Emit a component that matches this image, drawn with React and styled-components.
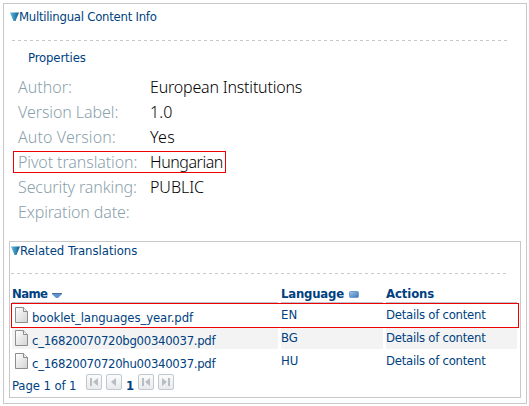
import React from 'react';
import styled, { createGlobalStyle } from 'styled-components';

const GlobalStyle = createGlobalStyle`
  * { box-sizing: border-box; }
  body { margin: 0; background: #fff; color: #003f80; font: 13px/16px "DejaVu Sans Condensed", Tahoma, sans-serif; }
`;
const Page = styled.main`
  width: 529px; height: 406px; padding: 3px 2px 2px 3px; overflow: hidden;
`;
const OuterPanel = styled.section`
  width: 524px; height: 401px; border: 1px solid #c8c8c8; padding: 0 5px;
`;
const InnerPanel = styled.section`
  width: 512px; height: 157px; border: 1px solid #c8c8c8; margin-top: 18px; padding: 0 1px;
`;
const Text = styled.span`
  letter-spacing: ${p => p.$spacing || 0}px; white-space: nowrap;
`;
const Title = styled.h2`
  display: flex; align-items: flex-start; margin: 0; height: ${p => p.$height}px;
  padding: ${p => p.$pad}; font-size: 13px; font-weight: 400; line-height: 16px;
  svg { margin-top: 3px; flex: none; }
`;
const Divider = styled.div`
  height: 1px; width: ${p => p.$width}px; margin-left: ${p => p.$left}px;
  background: repeating-linear-gradient(90deg, #c8c8c8 0 3px, #fff 3px 6px);
`;
const Subtitle = styled.h3`
  margin: 9px 0 10px 19px; font-size: 13px; font-weight: 400; line-height: 16px;
`;
const Properties = styled.dl`
  margin: 0 0 0 4px; display: grid; grid-auto-rows: 22px; row-gap: 3px; justify-items: start;
`;
const Property = styled.div`
  display: grid; grid-template-columns: 132px max-content; height: 22px; padding: 0 2px 0 4px;
  border: 1px solid ${p => (p.$marked ? '#f00000' : 'transparent')};
  font: 300 16px/20px "Noto Sans", sans-serif;
  dt { color: #8b9fac; white-space: nowrap; }
  dd { margin: 0; color: #000; white-space: nowrap; }
`;
const Table = styled.div`
  margin-top: 9px; width: 508px;
`;
const Columns = styled.div`
  display: grid; grid-template-columns: 266px 102px 131px; column-gap: 3px; margin-left: 1px;
`;
const HeadCell = styled.div`
  display: flex; align-items: flex-start; height: 20px; padding-top: 3px; font-weight: 700;
  border-bottom: 1px solid #bcc5ca;
  svg { margin: ${p => p.$iconTop || 0}px 0 0 5px; }
`;
const Row = styled(Columns)`
  height: ${p => (p.$marked ? 25 : 21)}px; margin-bottom: ${p => (p.$marked ? 0 : 2)}px;
  ${p => p.$marked && 'margin-left: 0; width: 508px; border: 1px solid #f00000;'}
`;
const Cell = styled.div`
  display: flex; align-items: flex-start; background: ${p => (p.$shaded ? '#f3f3f3' : 'transparent')};
  padding-top: ${p => p.$top}px;
`;
const FileIconBox = styled.span`
  display: flex; flex: none; margin: ${p => p.$top}px 4px 0 3px;
`;
const FileName = styled(Text)`
  margin-top: ${p => p.$top}px;
`;
const Pager = styled.nav`
  display: flex; align-items: flex-start; gap: 4px; margin: 2px 0 0 1px;
`;
const PageCount = styled(Text)`
  width: 70px; margin-top: 4px;
`;
const PageButton = styled.button`
  width: 16px; height: 16px; padding: 0; border: 1px solid #c0c8d0; border-radius: 2px;
  background: linear-gradient(#fbfbfb, #e8eaec); display: grid; place-items: center;
`;
const Current = styled.b`
  width: 8px; margin: 4px 0 0; text-align: center;
`;

const Twisty = () => (
  <svg width="9" height="10" viewBox="0 0 9 10">
    <defs><linearGradient id="tw"><stop stopColor="#62bddc" /><stop offset="1" stopColor="#075b91" /></linearGradient></defs>
    <path d="M0 .5h9L5.5 9h-2z" fill="url(#tw)" />
  </svg>
);
const FileIcon = () => (
  <svg width="13" height="16" viewBox="0 0 13 16">
    <defs><linearGradient id="fi" x2="1" y2="1"><stop stopColor="#fff" /><stop offset="1" stopColor="#d2d2d2" /></linearGradient></defs>
    <path d="M.5.5h8l4 4v11H.5z" fill="url(#fi)" stroke="#8d8d8d" />
    <path d="M8.5.5v4h4" fill="#eee" stroke="#8d8d8d" />
  </svg>
);
const SortDown = () => (
  <svg width="10" height="5" viewBox="0 0 10 5">
    <path d="M0 0h10v1L6 5H4L0 1z" fill="#5f94d0" /><path d="M0 .5h10" stroke="#4a6c94" />
  </svg>
);
const SortNone = () => (
  <svg width="10" height="7" viewBox="0 0 10 7">
    <defs><linearGradient id="sn" x2="1" y2="1"><stop stopColor="#9cc8ee" /><stop offset="1" stopColor="#3c74b5" /></linearGradient></defs>
    <rect x=".5" y=".5" width="9" height="6" rx="1" fill="url(#sn)" stroke="#6f9cca" />
  </svg>
);
const PageIcon = ({ kind }) => (
  <svg width="10" height="10" viewBox="0 0 10 10" fill="#b8bdc1">
    {kind === 'first' && <path d="M1 1h2v8H1zM9 1v8L4 5z" />}
    {kind === 'prev' && <path d="M7 1v8L2 5z" />}
    {kind === 'last' && <path d="M7 1h2v8H7zM1 1v8l5-4z" />}
  </svg>
);

const properties = [
  ['Author:', 'European Institutions', 0, -0.2],
  ['Version Label:', '1.0', -0.08, 0.1],
  ['Auto Version:', 'Yes', 0.1, 0.3],
  ['Pivot translation:', 'Hungarian', -0.1, -0.45],
  ['Security ranking:', 'PUBLIC', -0.1, -0.05],
  ['Expiration date:', '', -0.12, 0],
];
const files = [
  ['booklet_languages_year.pdf', 'EN', -0.09],
  ['c_16820070720bg00340037.pdf', 'BG', -0.29],
  ['c_16820070720hu00340037.pdf', 'HU', -0.29],
];

export default function App() {
  return (
    <Page>
      <GlobalStyle />
      <OuterPanel>
        <Title $height={36} $pad="5px 0 0 1px"><Twisty /><Text $spacing={-0.25}>Multilingual Content Info</Text></Title>
        <Divider $width={495} $left={3} />
        <Subtitle><Text $spacing={-0.14}>Properties</Text></Subtitle>
        <Properties>
          {properties.map(([label, value, labelSpacing, valueSpacing]) => (
            <Property key={label} $marked={label === 'Pivot translation:'}>
              <dt><Text $spacing={labelSpacing}>{label}</Text></dt><dd><Text $spacing={valueSpacing}>{value}</Text></dd>
            </Property>
          ))}
        </Properties>
        <InnerPanel>
          <Title $height={31} $pad="1px 0 0 0"><Twisty /><Text $spacing={-0.02}>Related Translations</Text></Title>
          <Divider $width={495} $left={0} />
          <Table>
            <Columns>
              <HeadCell $iconTop={7}><Text $spacing={-0.6}>Name</Text><SortDown /></HeadCell>
              <HeadCell $iconTop={5}><Text $spacing={-0.2}>Language</Text><SortNone /></HeadCell>
              <HeadCell><Text $spacing={-0.1}>Actions</Text></HeadCell>
            </Columns>
            {files.map(([name, lang, spacing], i) => (
              <Row key={name} $marked={i === 0}>
                <Cell $shaded={i === 1}>
                  <FileIconBox $top={i === 0 ? 3 : 2}><FileIcon /></FileIconBox>
                  <FileName $top={i === 0 ? 6 : 5} $spacing={spacing}>{name}</FileName>
                </Cell>
                <Cell $shaded={i === 1} $top={i === 0 ? 3 : 2}>{lang}</Cell>
                <Cell $shaded={i === 1} $top={i === 0 ? 3 : 2}><Text $spacing={-0.25}>Details of content</Text></Cell>
              </Row>
            ))}
          </Table>
          <Pager>
            <PageCount $spacing={-0.1}>Page 1 of 1</PageCount>
            <PageButton><PageIcon kind="first" /></PageButton>
            <PageButton><PageIcon kind="prev" /></PageButton>
            <Current>1</Current>
            <PageButton><PageIcon kind="first" /></PageButton>
            <PageButton><PageIcon kind="last" /></PageButton>
          </Pager>
        </InnerPanel>
      </OuterPanel>
    </Page>
  );
}
